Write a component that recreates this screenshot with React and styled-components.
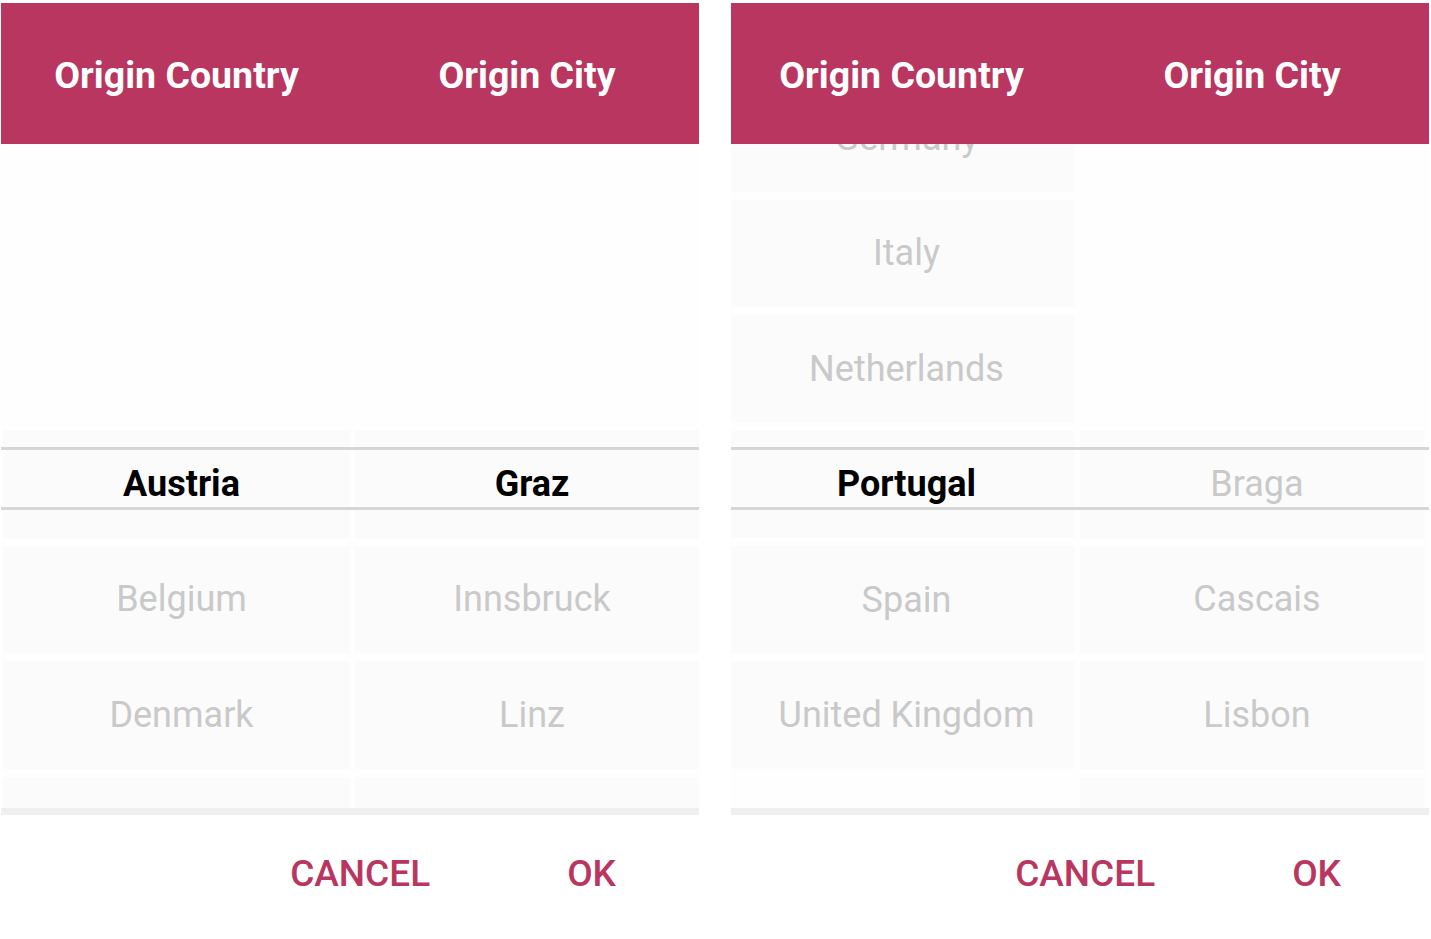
import React from "react";
import styled, { createGlobalStyle } from "styled-components";

const ROW = 115.5;
const BAND_CENTER = 340; // selected row centre, measured from the top of the wheel area

const GlobalStyle = createGlobalStyle`
  html, body {
    margin: 0;
    background: #ffffff;
    font-family: Roboto, "Liberation Sans", Arial, sans-serif;
  }
  * { box-sizing: border-box; }
`;

const Page = styled.div`
  display: flex;
  gap: 32px;
  padding: 3px 0 0 1px;
  height: 939px;
  overflow: hidden;
`;

const Panel = styled.div`
  width: 698px;
  height: 936px;
  overflow: hidden;
`;

const Inner = styled.div`
  display: flex;
  flex-direction: column;
  margin-left: ${(p) => p.$shift}px;
  width: ${(p) => 698 - p.$shift}px;
`;

const Header = styled.div`
  height: 141px;
  background: #b8365f;
  display: grid;
  grid-template-columns: 347px 344px;
  column-gap: 5px;
  padding: 3px 0 0 2px;
  align-items: center;
`;

const HeaderCell = styled.div`
  color: #ffffff;
  font-size: 37.5px;
  font-weight: 700;
  text-align: center;
`;

const Wheel = styled.div`
  position: relative;
  height: 664px;
  overflow: hidden;
  background: #fefefe;
  display: grid;
  grid-template-columns: 347px 344px;
  column-gap: 5px;
  padding-left: 2px;
`;

const Column = styled.div`
  display: flex;
  flex-direction: column;
`;

const Item = styled.div`
  flex: 0 0 ${ROW}px;
  padding: 4px 0;
`;

const Cell = styled.div`
  height: 100%;
  background: #fbfbfb;
  display: flex;
  align-items: center;
  justify-content: center;
  padding-left: 10px;
  font-size: 36px;
  font-weight: ${(p) => (p.$active ? 700 : 400)};
  color: ${(p) => (p.$active ? "#000000" : "#c9c9c9")};
  white-space: nowrap;
`;

const Band = styled.div`
  position: absolute;
  left: 0;
  right: 0;
  top: 303px;
  height: 63px;
  border-top: 3px solid #d6d6d6;
  border-bottom: 3px solid #d6d6d6;
  pointer-events: none;
`;

const Divider = styled.div`
  height: 7px;
  background: #efefef;
`;

const Footer = styled.div`
  height: 124px;
  background: #ffffff;
  display: flex;
  justify-content: flex-end;
  align-items: center;
  gap: 137px;
  padding: 0 ${(p) => 83 - p.$shift}px 8px 0;
`;

const Action = styled.button`
  background: none;
  border: none;
  padding: 0;
  font-family: inherit;
  font-size: 37px;
  font-weight: 500;
  color: #b8365f;
  cursor: pointer;
`;

const countries = [
  "Austria",
  "Belgium",
  "Denmark",
  "France",
  "Germany",
  "Italy",
  "Netherlands",
  "Portugal",
  "Spain",
  "United Kingdom",
];

const cities = {
  Austria: ["Graz", "Innsbruck", "Linz", "Salzburg", "Vienna"],
  Portugal: ["Braga", "Cascais", "Lisbon", "Porto"],
};

// only the rows around the selection are rendered; the next row below
// shows as an empty slot peeking under the wheel
const WheelColumn = ({ items, selected, active }) => {
  const first = Math.max(0, selected - 3);
  const last = Math.min(items.length - 1, selected + 3);
  const offset = BAND_CENTER - ROW / 2 - (selected - first) * ROW;
  const rows = [];
  for (let i = first; i <= last; i++) {
    rows.push(
      <Item key={items[i]}>
        <Cell $active={active && i === selected}>
          {i <= selected + 2 ? items[i] : null}
        </Cell>
      </Item>
    );
  }
  return <Column style={{ transform: `translateY(${offset}px)` }}>{rows}</Column>;
};

const Picker = ({ shift, country, cityActive }) => (
  <Panel>
    <Inner $shift={shift}>
      <Header>
        <HeaderCell>Origin Country</HeaderCell>
        <HeaderCell>Origin City</HeaderCell>
      </Header>
      <Wheel>
        <WheelColumn items={countries} selected={countries.indexOf(country)} active />
        <WheelColumn items={cities[country]} selected={0} active={cityActive} />
        <Band />
      </Wheel>
      <Divider />
      <Footer $shift={shift}>
        <Action>CANCEL</Action>
        <Action>OK</Action>
      </Footer>
    </Inner>
  </Panel>
);

export default function App() {
  return (
    <>
      <GlobalStyle />
      <Page>
        <Picker shift={0} country="Austria" cityActive />
        <Picker shift={-5} country="Portugal" cityActive={false} />
      </Page>
    </>
  );
}
